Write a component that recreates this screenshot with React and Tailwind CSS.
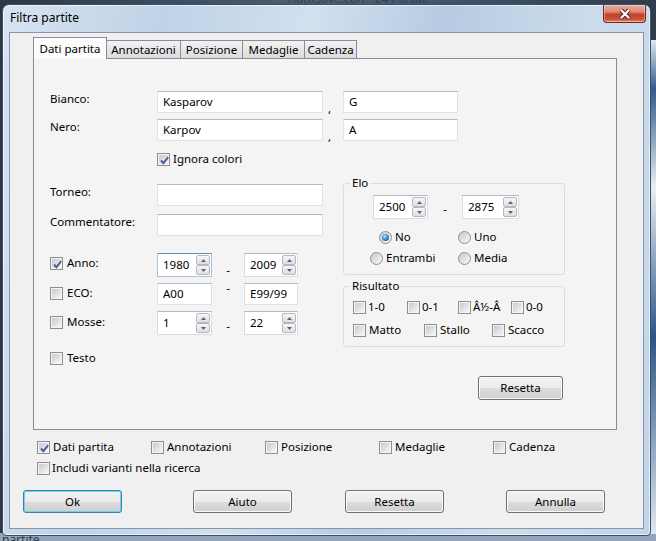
import React from 'react';

// Win7-style checkbox
function Box({ checked }) {
  return (
    <span className="relative inline-block w-[13px] h-[13px] shrink-0 border border-[#8e8f8f] bg-[#f4f4f4] p-[1px]">
      <span className="block w-full h-full bg-[linear-gradient(135deg,#c6cad0,#f6f6f6)]" />
      {checked && (
        <svg className="absolute left-[1px] top-[1px]" width="11" height="11" viewBox="0 0 11 11">
          <path d="M2 5.5 L4.4 8.2 L9.2 2.2" fill="none" stroke="#4a5d97" strokeWidth="1.9" />
        </svg>
      )}
    </span>
  );
}

function Check({ label, checked, gap = 'gap-[3px]', className = '' }) {
  return (
    <div className={`flex items-center ${gap} ${className}`}>
      <Box checked={checked} />
      <span className="leading-[16px] whitespace-nowrap">{label}</span>
    </div>
  );
}

function Radio({ label, on, className = '' }) {
  return (
    <div className={`flex items-center gap-[3px] ${className}`}>
      <span className="w-[13px] h-[13px] shrink-0 rounded-full border border-[#8e8f8f] bg-[linear-gradient(135deg,#c4c8ce,#fafafa)] flex items-center justify-center">
        {on && <span className="w-[7px] h-[7px] rounded-full bg-[radial-gradient(circle_at_40%_35%,#b8e4ff_0%,#3d8ed3_45%,#0d3c77_100%)]" />}
      </span>
      <span className="leading-[16px] whitespace-nowrap">{label}</span>
    </div>
  );
}

function TextBox({ value = '', w, h = 'h-[22px]' }) {
  return (
    <div className={`${w} ${h} shrink-0 bg-white border border-[#dfe3e8] border-t-[#b4b7bd] flex items-center pl-[5px]`}>
      {value}
    </div>
  );
}

function Arrow({ up }) {
  return (
    <svg width="5" height="3" viewBox="0 0 5 3">
      <path d={up ? 'M0 3 L2.5 0 L5 3Z' : 'M0 0 L2.5 3 L5 0Z'} fill="#56647c" />
    </svg>
  );
}

function Spin({ value, w, focus }) {
  return (
    <div
      className={`${w} h-[24px] shrink-0 bg-white border flex items-stretch ${
        focus ? 'border-[#a9c3dc] border-t-[#5a8cbf]' : 'border-[#d9dde3] border-t-[#b4b7bd]'
      }`}
    >
      <div className="flex-1 flex items-center pl-[5px]">{value}</div>
      <div className="w-[15px] flex flex-col py-[1px] pr-[1px]">
        <div className="flex-1 border border-[#b5b9bf] rounded-[2px] bg-[linear-gradient(#f6f6f6,#dedfe1)] flex items-center justify-center">
          <Arrow up />
        </div>
        <div className="flex-1 border border-[#b5b9bf] rounded-[2px] bg-[linear-gradient(#f6f6f6,#dedfe1)] flex items-center justify-center">
          <Arrow />
        </div>
      </div>
    </div>
  );
}

function Btn({ children, w = 'w-[99px]', focus, className = '' }) {
  return (
    <div
      className={`${w} h-[23px] shrink-0 rounded-[3px] border flex items-center justify-center bg-[linear-gradient(#f2f2f2_0%,#ebebeb_50%,#dddddd_51%,#cfcfcf_100%)] ${
        focus
          ? 'border-[#3c7fb1] shadow-[inset_0_0_0_1px_#6fd0f5]'
          : 'border-[#707070] shadow-[inset_0_0_0_1px_#fcfcfc]'
      } ${className}`}
    >
      {children}
    </div>
  );
}

function Tab({ label, active, w }) {
  if (active) {
    return (
      <div className={`${w} h-[22px] -mb-[1px] relative z-10 bg-[#fcfcfc] border border-[#898c95] border-b-0 flex items-center justify-center`}>
        {label}
      </div>
    );
  }
  return (
    <div className={`${w} h-[18px] bg-[linear-gradient(#f2f2f2,#dcdcdc)] border border-[#898c95] border-b-0 border-l-0 flex items-center justify-center`}>
      {label}
    </div>
  );
}

export default function App() {
  return (
    <div className="relative w-[656px] h-[541px] overflow-hidden bg-[linear-gradient(90deg,#2b3846,#4d6179_50%,#2e3c4c)] font-['Noto_Sans',sans-serif] text-[11.5px] text-black">
      {/* windows behind the dialog */}
      <div className="absolute left-[288px] top-[-7px] text-[12px] leading-[12px] text-[#38424d]">AutoSave.cbh - 24 Partite</div>
      <div className="absolute left-0 bottom-0 w-[656px] h-[8px] bg-[#93a6bb]" />
      <div className="absolute left-[2px] bottom-[-5px] text-[12px] leading-[12px] text-[#2a3a4e]">partite</div>
      <div className="absolute right-0 top-[40px] w-[6px] h-[494px] bg-[linear-gradient(#dfe7ef,#2f5b8c_10%,#e9eef3_30%,#2b5588_60%,#dfe7ef)]" />

      {/* dialog window */}
      <div className="absolute left-[2px] top-[4px] w-[649px] h-[532px] rounded-t-[7px] rounded-b-[4px] border border-[#3f4f63] bg-[linear-gradient(100deg,#d7e3f0_0%,#bfd2e7_22%,#d2e0ef_42%,#b6cbe2_60%,#cddcec_80%,#c1d4e9_100%)] shadow-[inset_0_0_0_1px_rgba(255,255,255,0.6)] flex flex-col px-[6px] pb-[6px]">
        <div className="h-[27px] flex items-start justify-between">
          <div className="pl-[1px] h-[26px] flex items-center text-[12px] text-black">Filtra partite</div>
          <div className="w-[43px] h-[18px] -mr-[2px] rounded-b-[4px] border border-[#6b2a22] border-t-0 bg-[linear-gradient(#eaab9b_0%,#dc8a75_40%,#c5412c_55%,#cf5038_85%,#e6997d_100%)] shadow-[inset_0_0_0_1px_rgba(255,255,255,0.35)] flex items-center justify-center">
            <svg width="14" height="12" viewBox="0 0 14 12">
              <path d="M3 2 L11 10 M11 2 L3 10" stroke="#4a2a26" strokeWidth="4.2" />
              <path d="M3 2 L11 10 M11 2 L3 10" stroke="#ffffff" strokeWidth="2.2" />
            </svg>
          </div>
        </div>

        <div className="flex-1 bg-[#f0f0f0] border border-[#8797ab] flex flex-col">
          {/* tabs */}
          <div className="mt-[4px] ml-[23px] h-[21px] flex items-end">
            <Tab label="Dati partita" active w="w-[74px]" />
            <Tab label="Annotazioni" w="w-[74px]" />
            <Tab label="Posizione" w="w-[62px]" />
            <Tab label="Medaglie" w="w-[62px]" />
            <Tab label="Cadenza" w="w-[52px]" />
          </div>

          {/* tab page */}
          <div className="ml-[23px] w-[584px] h-[372px] border border-[#898c95] bg-[#f4f4f4] pl-[16px] pt-[32px]">
            <div className="flex h-[22px]">
              <div className="w-[107px] leading-[16px]">Bianco:</div>
              <TextBox w="w-[166px]" value="Kasparov" />
              <div className="w-[20px] self-end pl-[5px] leading-[8px]">,</div>
              <TextBox w="w-[115px]" value="G" />
            </div>
            <div className="flex h-[22px] mt-[6px]">
              <div className="w-[107px] leading-[16px]">Nero:</div>
              <TextBox w="w-[166px]" value="Karpov" />
              <div className="w-[20px] self-end pl-[5px] leading-[8px]">,</div>
              <TextBox w="w-[115px]" value="A" />
            </div>
            <Check label="Ignora colori" checked className="mt-[11px] ml-[107px] h-[14px]" />

            <div className="flex items-start mt-[9px]">
              {/* left column */}
              <div className="w-[293px] pt-[9px]">
                <div className="flex h-[22px]">
                  <div className="w-[107px] leading-[16px]">Torneo:</div>
                  <TextBox w="w-[166px]" />
                </div>
                <div className="flex h-[22px] mt-[8px]">
                  <div className="w-[107px] leading-[16px]">Commentatore:</div>
                  <TextBox w="w-[166px]" />
                </div>

                <div className="flex h-[24px] mt-[17px]">
                  <Check label="Anno:" checked gap="gap-[4px]" className="w-[107px] self-start mt-[2px]" />
                  <Spin w="w-[55px]" value="1980" focus />
                  <div className="w-[32px] text-center leading-[16px] mt-[9px]">-</div>
                  <Spin w="w-[54px]" value="2009" />
                </div>
                <div className="flex h-[22px] mt-[6px]">
                  <Check label="ECO:" gap="gap-[4px]" className="w-[107px] self-start mt-[2px]" />
                  <TextBox w="w-[55px]" value="A00" />
                  <div className="w-[32px] text-center leading-[16px] -mt-[3px]">-</div>
                  <TextBox w="w-[54px]" value="E99/99" />
                </div>
                <div className="flex h-[24px] mt-[6px]">
                  <Check label="Mosse:" gap="gap-[4px]" className="w-[107px] self-start mt-[3px]" />
                  <Spin w="w-[55px]" value="1" />
                  <div className="w-[32px] text-center leading-[16px] mt-[7px]">-</div>
                  <Spin w="w-[54px]" value="22" />
                </div>
                <Check label="Testo" gap="gap-[4px]" className="mt-[16px] h-[14px]" />
              </div>

              {/* right column */}
              <div className="w-[222px] flex flex-col">
                <fieldset className="h-[100px] border border-[#d5dfe5] rounded-[3px]">
                  <legend className="ml-[6px] px-[2px] leading-[16px]">Elo</legend>
                  <div className="flex h-[24px] mt-[4px] pl-[29px]">
                    <Spin w="w-[55px]" value="2500" />
                    <div className="w-[34px] text-center leading-[16px] mt-[6px]">-</div>
                    <Spin w="w-[57px]" value="2875" />
                  </div>
                  <div className="flex mt-[11px] pl-[35px] h-[14px]">
                    <Radio label="No" on className="w-[79px]" />
                    <Radio label="Uno" />
                  </div>
                  <div className="flex mt-[7px] pl-[26px] h-[14px]">
                    <Radio label="Entrambi" className="w-[88px]" />
                    <Radio label="Media" />
                  </div>
                </fieldset>

                <fieldset className="h-[69px] mt-[3px] border border-[#d5dfe5] rounded-[3px]">
                  <legend className="ml-[6px] px-[2px] leading-[16px]">Risultato</legend>
                  <div className="flex mt-[6px] pl-[9px] h-[14px]">
                    <Check label="1-0" gap="gap-[2px]" className="w-[54px]" />
                    <Check label="0-1" gap="gap-[2px]" className="w-[51px]" />
                    <Check label="Â½-Â" gap="gap-[2px]" className="w-[53px]" />
                    <Check label="0-0" gap="gap-[2px]" />
                  </div>
                  <div className="flex mt-[9px] pl-[9px] h-[14px]">
                    <Check label="Matto" className="w-[71px]" />
                    <Check label="Stallo" className="w-[68px]" />
                    <Check label="Scacco" />
                  </div>
                </fieldset>

                <Btn w="w-[85px]" className="mt-[29px] ml-[135px] h-[24px]">Resetta</Btn>
              </div>
            </div>
          </div>

          {/* search scope */}
          <div className="flex mt-[9px] ml-[27px] h-[16px]">
            <Check label="Dati partita" checked className="w-[114px]" />
            <Check label="Annotazioni" className="w-[114px]" />
            <Check label="Posizione" className="w-[114px]" />
            <Check label="Medaglie" className="w-[114px]" />
            <Check label="Cadenza" />
          </div>
          <Check label="Includi varianti nella ricerca" gap="gap-[2px]" className="mt-[5px] ml-[27px] h-[16px]" />

          {/* dialog buttons */}
          <div className="flex mt-[14px]">
            <Btn focus className="ml-[13px]">Ok</Btn>
            <Btn className="ml-[71px]">Aiuto</Btn>
            <Btn className="ml-[53px]">Resetta</Btn>
            <Btn className="ml-[62px]">Annulla</Btn>
          </div>
        </div>
      </div>
    </div>
  );
}
